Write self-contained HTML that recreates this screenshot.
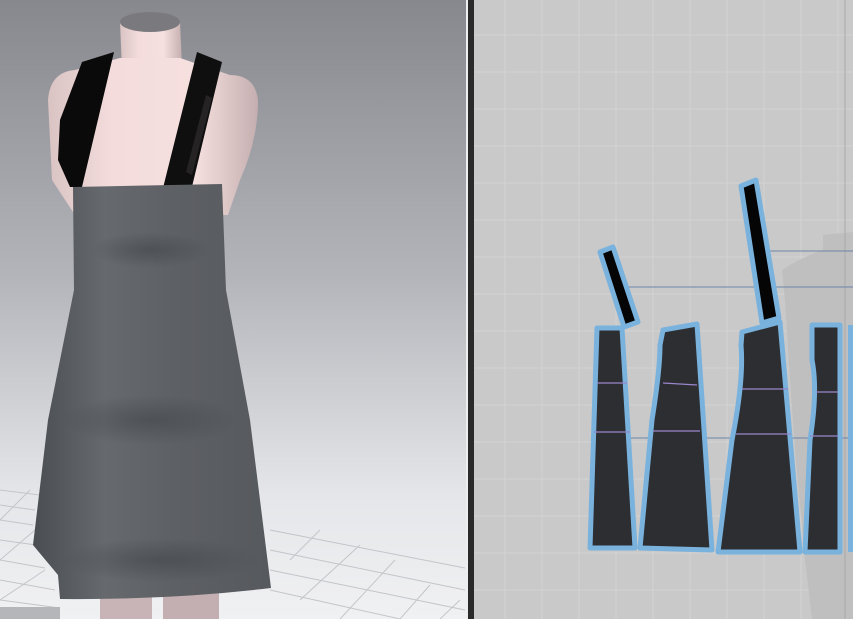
<!DOCTYPE html>
<html><head><meta charset="utf-8"><style>
html,body{margin:0;padding:0;width:853px;height:619px;overflow:hidden;background:#c9c9c9}
svg{display:block}
</style></head><body>
<svg width="853" height="619" viewBox="0 0 853 619" xmlns="http://www.w3.org/2000/svg">
<defs>
<linearGradient id="bg" x1="0" y1="0" x2="0" y2="1">
<stop offset="0" stop-color="#86888e"/><stop offset="0.45" stop-color="#b4b5ba"/><stop offset="0.8" stop-color="#e5e6e9"/><stop offset="1" stop-color="#f0f1f3"/></linearGradient>
<linearGradient id="skin" x1="0" y1="0" x2="1" y2="0">
<stop offset="0" stop-color="#d9c3c3"/><stop offset="0.3" stop-color="#f3dcdb"/><stop offset="0.7" stop-color="#f6e0df"/><stop offset="1" stop-color="#c4aeaf"/></linearGradient>
<linearGradient id="skirt" x1="0" y1="0" x2="1" y2="0">
<stop offset="0" stop-color="#4a4d51"/><stop offset="0.3" stop-color="#66696d"/><stop offset="0.6" stop-color="#5d6064"/><stop offset="1" stop-color="#56595d"/></linearGradient>
<radialGradient id="shad" cx="0.5" cy="0.5" r="0.5"><stop offset="0" stop-color="#3c3f43" stop-opacity="0.5"/><stop offset="1" stop-color="#3c3f43" stop-opacity="0"/></radialGradient>
</defs>
<rect x="0" y="0" width="466" height="619" fill="url(#bg)"/>
<g stroke="#c4c5c9" stroke-width="1" fill="none">
<path d="M0,490 L40,495 M0,505 L35,510 M0,520 L33,525 M0,540 L36,545 M0,560 L45,568 M0,580 L55,590 M0,600 L60,608"/>
<path d="M270,530 L465,568 M270,550 L465,590 M270,570 L465,610 M270,590 L400,619"/>
<path d="M0,520 L30,490 M0,560 L35,530 M0,600 L45,570 M290,560 L320,530 M300,600 L360,545 M340,619 L395,560 M400,619 L430,585 M440,619 L460,600"/>
</g>
<rect x="0" y="607" width="60" height="12" fill="#b5b6b9"/>
<rect x="100" y="590" width="52" height="29" fill="#c8b4b6"/>
<rect x="163" y="590" width="56" height="29" fill="#c3afb1"/>
<path d="M120,22 L122,70 Q150,82 182,66 L180,22 Z" fill="url(#skin)"/>
<ellipse cx="150" cy="22" rx="30" ry="10" fill="#7a7a7e"/>
<path d="M75,70 Q50,72 48,100 L52,180 L75,215 L228,215 L240,180 Q258,140 258,100 Q255,75 230,75 L180,58 L120,58 Z" fill="url(#skin)"/>
<path d="M82,62 L114,52 L82,187 L70,187 L58,160 L60,120 Z" fill="#0b0a0a"/>
<path d="M197,52 L222,62 L190,195 L162,192 Z" fill="#100f0f"/>
<path d="M206,95 L212,98 L192,175 L186,172 Z" fill="#3a3737" opacity="0.5"/>
<path d="M73,187 L222,184 L226,290 L250,420 L271,588 Q170,600 60,599 L58,575 L33,545 L48,420 L74,290 Z" fill="url(#skirt)"/>
<ellipse cx="150" cy="250" rx="60" ry="18" fill="url(#shad)"/>
<ellipse cx="150" cy="420" rx="90" ry="25" fill="url(#shad)"/>
<ellipse cx="160" cy="560" rx="100" ry="22" fill="url(#shad)"/>
<rect x="466" y="0" width="2" height="619" fill="#eceef0"/>
<rect x="468" y="0" width="6" height="619" fill="#2a2a2a"/>
<rect x="474" y="0" width="379" height="619" fill="#c9c9c9"/>
<g stroke="#d2d2d2" stroke-width="1">
<path d="M474,35H853M474,72H853M474,109H853M474,146H853M474,183H853M474,220H853M474,257H853M474,294H853M474,331H853M474,368H853M474,405H853M474,442H853M474,479H853M474,516H853M474,553H853M474,590H853"/>
<path d="M505,0V619M542,0V619M579,0V619M616,0V619M653,0V619M690,0V619M727,0V619M764,0V619M801,0V619M838,0V619"/>
</g>
<path d="M823,235 L853,232 L853,619 L812,619 L805,560 L795,450 L790,380 L785,300 L782,270 Q800,258 823,250 Z" fill="#bfbfbf"/>
<line x1="845" y1="0" x2="845" y2="619" stroke="#a9a9a9"/>
<g stroke="#6d86aa" stroke-width="1">
<line x1="612" y1="287" x2="853" y2="287"/>
<line x1="765" y1="251" x2="853" y2="251"/>
<line x1="630" y1="438" x2="853" y2="438"/>
</g>
<g fill="#2d2e31" stroke="#7ab2de" stroke-width="5" stroke-linejoin="round">
<path d="M597,328 L622,328 L635,548 L590,548 Z"/>
<path d="M663,330 L697,324 L712,550 L640,548 L652,420 Q660,370 660,345 Z"/>
<path d="M742,332 L780,322 L800,552 L718,552 L732,440 Q744,380 741,345 Z"/>
<path d="M812,325 L840,325 L840,552 L805,552 L810,440 Q818,390 812,360 Z"/>
<path d="M600,252 L613,247 L638,322 L624,327 Z" fill="#050505"/>
<path d="M741,186 L756,180 L779,318 L762,323 Z" fill="#050505"/>
</g>
<rect x="848" y="325" width="5" height="227" fill="#7ab2de"/>
<g stroke="#9a86cc" stroke-width="1.2">
<line x1="597" y1="383" x2="627" y2="383"/><line x1="594" y1="432" x2="630" y2="432"/>
<line x1="663" y1="383" x2="697" y2="385"/><line x1="653" y1="431" x2="700" y2="431"/>
<line x1="742" y1="389" x2="788" y2="389"/><line x1="736" y1="434" x2="791" y2="434"/>
<line x1="816" y1="392" x2="838" y2="392"/><line x1="810" y1="436" x2="838" y2="436"/>
</g>
</svg>
</body></html>
